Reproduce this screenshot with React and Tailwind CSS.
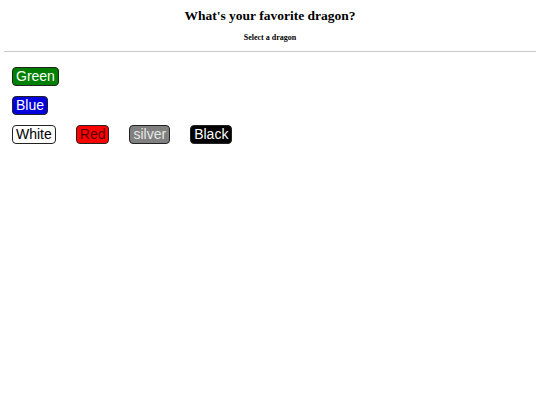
import React from "react";

const rows = [
  [{ name: "Green", cls: "bg-[#008000] text-white" }],
  [{ name: "Blue", cls: "bg-[#0000dd] text-white" }],
  [
    { name: "White", cls: "bg-white text-black" },
    { name: "Red", cls: "bg-[#ff0000] text-[#500000]" },
    { name: "silver", cls: "bg-[#808080] text-[#e8e8e8]" },
    { name: "Black", cls: "bg-black text-white" },
  ],
];

function DragonButton({ dragon }) {
  return (
    <button
      className={`${dragon.cls} border border-[#222] rounded-[4px] px-[3px] h-[19px] text-[14px] leading-[17px] font-['Liberation_Sans',Arial,sans-serif]`}
    >
      {dragon.name}
    </button>
  );
}

export default function App() {
  return (
    <div className="w-[540px] h-[405px] bg-white px-[4px] pt-[8px]">
      <h1 className="text-center font-bold text-[13.5px] leading-[16px] font-['Liberation_Serif','Times_New_Roman',serif] text-black">
        What's your favorite dragon?
      </h1>
      <p className="text-center font-bold text-[8px] leading-[10px] mt-[9px] font-['Liberation_Serif','Times_New_Roman',serif] text-black">
        Select a dragon
      </p>
      <hr className="mt-[8px] border-t border-[#c8c8c8]" />
      <div className="flex flex-col gap-[10px] pt-[15px] pl-[8px]">
        {rows.map((row, i) => (
          <div key={i} className="flex gap-[20px]">
            {row.map((d) => (
              <DragonButton key={d.name} dragon={d} />
            ))}
          </div>
        ))}
      </div>
    </div>
  );
}
